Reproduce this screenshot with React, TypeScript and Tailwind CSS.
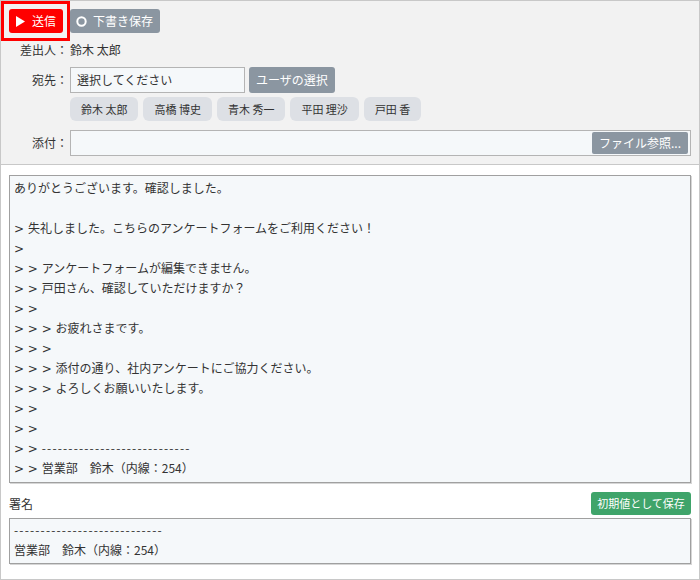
import React from "react";

const bodyLines = [
  "ありがとうございます。確認しました。",
  "",
  "> 失礼しました。こちらのアンケートフォームをご利用ください！",
  ">",
  "> > アンケートフォームが編集できません。",
  "> > 戸田さん、確認していただけますか？",
  "> >",
  "> > > お疲れさまです。",
  "> > >",
  "> > > 添付の通り、社内アンケートにご協力ください。",
  "> > > よろしくお願いいたします。",
  "> >",
  "> >",
  "> > ----------------------------",
  "> > 営業部　鈴木（内線：254）",
];

const sigLines = ["----------------------------", "営業部　鈴木（内線：254）"];

const chips = ["鈴木 太郎", "高橋 博史", "青木 秀一", "平田 理沙", "戸田 香"];

function Line({ text }: { text: string }) {
  const m = text.match(/^(> ?)+/);
  const prefix = m ? m[0] : "";
  const rest = text.slice(prefix.length);
  const isDash = /^-+$/.test(rest);
  return (
    <div className="h-[20px] leading-[20px] whitespace-pre text-[#333]">
      {prefix && <span className="font-['DejaVu_Sans',sans-serif] text-[12px]">{prefix}</span>}
      {isDash ? <span className="tracking-[1.15px]">{rest}</span> : rest}
    </div>
  );
}

export default function App() {
  return (
    <div className="w-[700px] h-[580px] box-border border border-[#c8c8c8] bg-white text-[12px] text-[#333] font-['Noto_Sans_CJK_JP','Noto_Sans',sans-serif] flex flex-col overflow-hidden">
      {/* header */}
      <div className="bg-[#f2f2f2] border-b border-[#c8c8c8] pr-[8px] pb-[8px]">
        <div className="flex items-start">
          <div className="border-[3px] border-[#ff0000] pt-[5px] pl-[5px] pr-[4px] pb-[5px]">
            <button className="w-[54px] h-[24px] bg-[#ff0000] rounded-[3px] text-white flex items-center justify-center gap-[7px] leading-none">
              <svg width="9" height="11" viewBox="0 0 9 11">
                <polygon points="0,0 9,5.5 0,11" fill="#fff" />
              </svg>
              <span>送信</span>
            </button>
          </div>
          <button className="mt-[8px] w-[90px] h-[24px] bg-[#8b96a1] rounded-[3px] text-white flex items-center pl-[6px] gap-[6px] leading-none">
            <svg width="11" height="11" viewBox="0 0 11 11">
              <circle cx="5.5" cy="5.5" r="4.2" fill="none" stroke="#fff" strokeWidth="2" />
            </svg>
            <span>下書き保存</span>
          </button>
        </div>

        <div className="flex items-center h-[18px]">
          <div className="w-[67px] text-right">差出人：</div>
          <div className="ml-[2px]">鈴木 太郎</div>
        </div>

        <div className="flex items-center h-[26px] mt-[8px]">
          <div className="w-[67px] text-right">宛先：</div>
          <div className="ml-[2px] w-[175px] h-[26px] box-border border border-[#b4b4b4] bg-[#f5f8fa] flex items-center pl-[6px] text-[#333]">
            選択してください
          </div>
          <button className="ml-[4px] w-[86px] h-[26px] bg-[#8b96a1] rounded-[3px] text-white flex items-center justify-center leading-none">
            ユーザの選択
          </button>
        </div>

        <div className="flex items-center h-[24px] mt-[4px] ml-[69px] gap-[5px]">
          {chips.map((c) => (
            <div
              key={c}
              className="h-[24px] px-[11px] rounded-[6px] bg-[#dde0e5] flex items-center text-[11px] text-[#333] leading-none whitespace-pre"
            >
              {c}
            </div>
          ))}
        </div>

        <div className="flex items-center h-[26px] mt-[9px]">
          <div className="w-[67px] text-right">添付：</div>
          <div className="ml-[2px] flex-1 h-[26px] box-border border border-[#b4b4b4] bg-[#f5f8fa] flex items-center justify-end pr-[2px]">
            <button className="w-[96px] h-[22px] bg-[#8b96a1] rounded-[2px] text-white flex items-center justify-center leading-none">
              ファイル参照...
            </button>
          </div>
        </div>
      </div>

      {/* body */}
      <div className="px-[8px] pt-[10px]">
        <div className="h-[308px] box-border border border-[#a0a0a0] shadow-[1px_1px_0_#d6d6d6] bg-[#f5f8fa] pl-[4px] pt-[2px] overflow-hidden">
          {bodyLines.map((l, i) => (
            <Line key={i} text={l} />
          ))}
        </div>

        <div className="mt-[9px] h-[23px] flex items-center justify-between">
          <div className="text-[#333]">署名</div>
          <button className="w-[100px] h-[23px] bg-[#3fa46a] rounded-[3px] text-white text-[11px] flex items-center justify-center leading-none">
            初期値として保存
          </button>
        </div>

        <div className="mt-[3px] h-[46px] box-border border border-[#a0a0a0] shadow-[1px_1px_0_#d6d6d6] bg-[#f5f8fa] pl-[4px] pt-[1px] overflow-hidden">
          {sigLines.map((l, i) => (
            <Line key={i} text={l} />
          ))}
        </div>
      </div>
    </div>
  );
}
